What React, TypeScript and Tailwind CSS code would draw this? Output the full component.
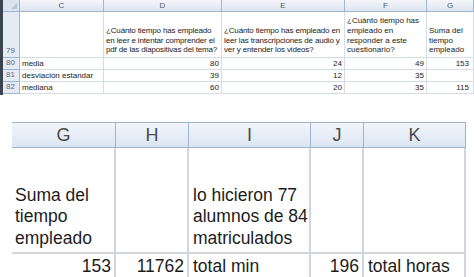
import { Fragment } from 'react'

const topCols = 'grid-cols-[17px_84px_118px_123px_82px_47px]'
const botCols = 'grid-cols-[104px_73px_122px_53px_102px]'

function TopSheet() {
  const head = 'flex items-center justify-center border-r border-b border-[#9eb6ce] bg-gradient-to-b from-[#f3f6fa] to-[#dee5ef] text-[8px] text-[#4a5a6e]'
  const num = 'flex items-end pl-[3px] border-b border-r border-[#9eb6ce] bg-[#e4ebf5] text-[8px] text-[#5a6a80]'
  const cell = 'border-r border-b border-[#d6dce6] text-[8px] leading-[9.7px] text-[#222] px-[2px] whitespace-nowrap overflow-hidden'
  const rows: [string, string, string, string, string, string][] = [
    ['80', 'media', '80', '24', '49', '153'],
    ['81', 'desviación estandar', '39', '12', '35', ''],
    ['82', 'mediana', '60', '20', '35', '115'],
  ]
  return (
    <div className="flex h-[95px]">
      <div className="w-[3px] bg-[#3b4550]" />
      <div className={`grid ${topCols} grid-rows-[12px_46px_12px_12px_12px] w-[471px] bg-white`}>
        <div className="relative border-r border-b border-[#9eb6ce] bg-[#dbe3ee]">
          <div className="absolute right-[2px] bottom-[2px] h-0 w-0 border-l-[6px] border-b-[6px] border-l-transparent border-b-[#b7c4d4]" />
        </div>
        {['C', 'D', 'E', 'F', 'G'].map((c) => (
          <div key={c} className={head}>{c}</div>
        ))}
        <div className={num}>79</div>
        <div className={cell} />
        <div className={`${cell} flex flex-col justify-end pb-[2px] tracking-[-0.15px]`}>
          <span>¿Cuánto tiempo has empleado</span>
          <span>en leer e intentar comprender el</span>
          <span>pdf de las diapositivas del tema?</span>
        </div>
        <div className={`${cell} flex flex-col justify-end pb-[2px] tracking-[-0.15px]`}>
          <span>¿Cuánto tiempo has empleado en</span>
          <span>leer las transcripciones de audio y</span>
          <span>ver y entender los videos?</span>
        </div>
        <div className={`${cell} flex flex-col justify-end pb-[2px]`}>
          <span>¿Cuánto tiempo has</span>
          <span>empleado en</span>
          <span>responder a este</span>
          <span>cuestionario?</span>
        </div>
        <div className={`${cell} flex flex-col justify-end pb-[2px]`}>
          <span>Suma del</span>
          <span>tiempo</span>
          <span>empleado</span>
        </div>
        {rows.map((r) => (
          <Fragment key={r[0]}>
            <div className={`${num} items-center`}>{r[0]}</div>
            <div className={`${cell} flex items-center`}>{r[1]}</div>
            <div className={`${cell} flex items-center justify-end`}>{r[2]}</div>
            <div className={`${cell} flex items-center justify-end`}>{r[3]}</div>
            <div className={`${cell} flex items-center justify-end`}>{r[4]}</div>
            <div className={`${cell} flex items-center justify-end pr-[4px]`}>{r[5]}</div>
          </Fragment>
        ))}
      </div>
    </div>
  )
}

function BottomSheet() {
  const head = 'flex items-center justify-center border-r border-t border-b border-[#9fb4cb] bg-gradient-to-b from-[#f2f6fb] to-[#dbe5f2] text-[18px] text-[#4a4a4a]'
  const big = 'flex flex-col justify-end border-r-2 border-b-2 border-[#d2d6dc] pb-[3px] text-[17.5px] leading-[21.5px] text-[#1c1c1c]'
  const last = 'flex items-center text-[17.5px] text-[#1c1c1c] border-r-2 border-[#d2d6dc] h-[24px]'
  return (
    <div className="pl-[12px] pt-[27px]">
      <div className={`grid ${botCols} w-[454px]`}>
        {['G', 'H', 'I', 'J', 'K'].map((c) => (
          <div key={c} className={`${head} h-[26px]`}>{c}</div>
        ))}
        <div className={`${big} h-[106px] pl-[3px]`}>
          <span>Suma del</span>
          <span>tiempo</span>
          <span>empleado</span>
        </div>
        <div className={`${big} h-[106px]`} />
        <div className={`${big} h-[106px] pl-[4px]`}>
          <span>lo hicieron 77</span>
          <span>alumnos de 84</span>
          <span>matriculados</span>
        </div>
        <div className={`${big} h-[106px]`} />
        <div className={`${big} h-[106px] border-r-0`} />
        <div className={`${last} justify-end pr-[3px]`}>153</div>
        <div className={`${last} justify-end pr-[3px]`}>11762</div>
        <div className={`${last} pl-[4px]`}>total min</div>
        <div className={`${last} justify-end pr-[3px]`}>196</div>
        <div className={`${last} border-r-0 pl-[4px]`}>total horas</div>
      </div>
    </div>
  )
}

export default function App() {
  return (
    <div className="w-[474px] h-[277px] overflow-hidden bg-white" style={{ fontFamily: '"Liberation Sans", Arial, sans-serif' }}>
      <TopSheet />
      <BottomSheet />
    </div>
  )
}
